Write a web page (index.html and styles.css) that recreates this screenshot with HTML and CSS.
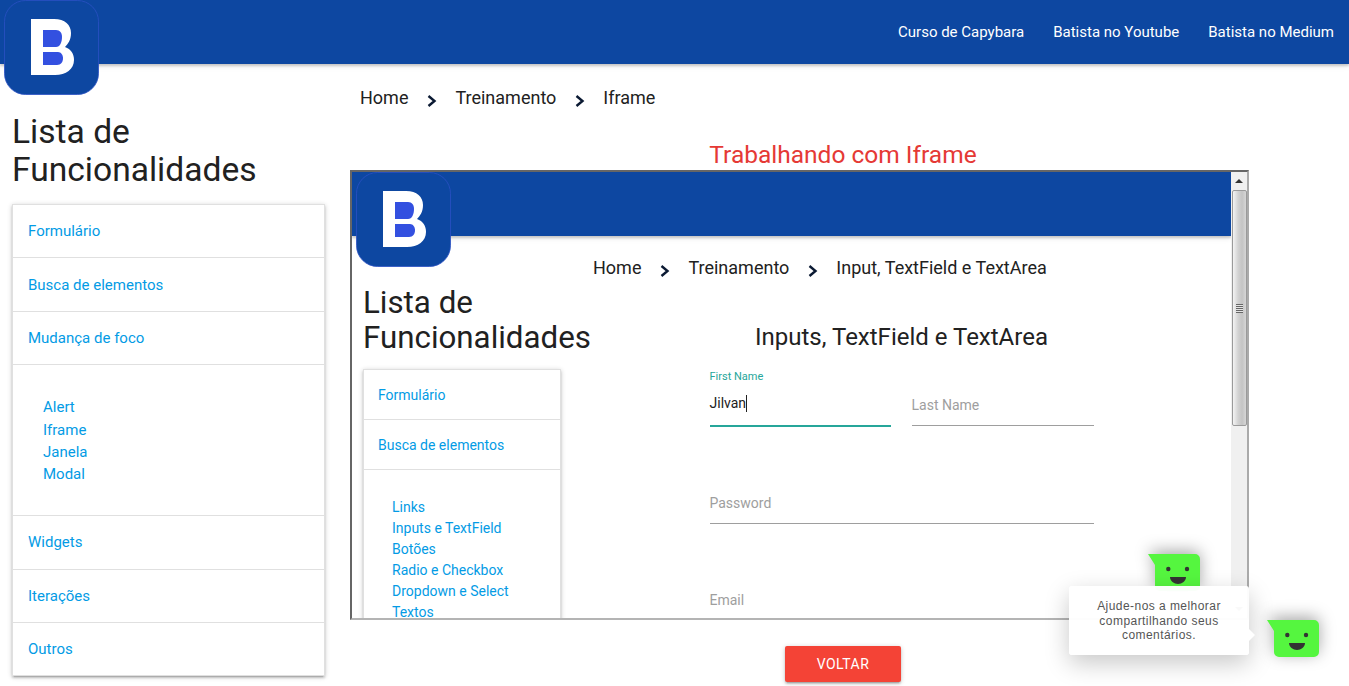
FILE: index.html
```html
<!DOCTYPE html>
<html lang="pt-BR">
<head>
<meta charset="utf-8">
<title>Trabalhando com Iframe</title>
<link rel="stylesheet" href="styles.css">
</head>
<body>
<svg class="defs" width="0" height="0" aria-hidden="true">
  <defs>
    <symbol id="logo" viewBox="0 0 95 95">
      <rect x="0.5" y="0.5" width="94" height="94" rx="21" fill="#0d47a1" stroke="#2b50c4" stroke-width="0.8"/>
      <path d="M27 19H50C61 19 67 25 67 33C67 40 64 44 61 47C67 49 70 54 70 60C70 69 62 75 51 75H27Z" fill="#fff"/>
      <path d="M39 30H52C56 30 58 33 58 37C58 42 56 47 52 47H39Z" fill="#3350e0"/>
      <path d="M39 52H54C57 52 59 55 59 58C59 62 57 65 53 65H39Z" fill="#3350e0"/>
    </symbol>
    <symbol id="chev" viewBox="0 0 10 12">
      <path d="M1.5 1L7.5 6L1.5 11" fill="none" stroke="#0b1a33" stroke-width="2.4"/>
    </symbol>
    <symbol id="bot" viewBox="0 0 52 37">
      <path d="M0 0H47a5 5 0 0 1 5 5V32a5 5 0 0 1-5 5H12a5 5 0 0 1-5-5V11Z" fill="#55f63f"/>
      <circle cx="20.3" cy="15" r="2.2" fill="#333"/>
      <circle cx="39" cy="15" r="2.2" fill="#333"/>
      <path d="M22 23H38C38 27 34 30 30 30C26 30 22 27 22 23Z" fill="#333"/>
    </symbol>
  </defs>
</svg>

<header class="topbar">
  <svg class="logo"><use href="#logo"/></svg>
  <nav class="topnav">
    <a>Curso de Capybara</a>
    <a>Batista no Youtube</a>
    <a>Batista no Medium</a>
  </nav>
</header>

<div class="layout">
  <aside class="side">
    <h2 class="side-title">Lista de Funcionalidades</h2>
    <ul class="menu">
      <li class="menu-item"><a>Formulário</a></li>
      <li class="menu-item"><a>Busca de elementos</a></li>
      <li class="menu-item"><a>Mudança de foco</a></li>
      <li class="menu-sub">
        <a>Alert</a><a>Iframe</a><a>Janela</a><a>Modal</a>
      </li>
      <li class="menu-item"><a>Widgets</a></li>
      <li class="menu-item"><a>Iterações</a></li>
      <li class="menu-item"><a>Outros</a></li>
    </ul>
  </aside>

  <main class="content">
    <div class="crumbs">
      <span>Home</span><svg class="chev"><use href="#chev"/></svg>
      <span>Treinamento</span><svg class="chev"><use href="#chev"/></svg>
      <span>Iframe</span>
    </div>
    <h4 class="page-title">Trabalhando com Iframe</h4>

    <div class="frame">
      <div class="frame-page">
        <div class="topbar inner-bar">
          <svg class="logo inner-logo"><use href="#logo"/></svg>
        </div>
        <div class="inner-layout">
          <aside class="inner-side">
            <h2 class="inner-title">Lista de Funcionalidades</h2>
            <ul class="menu inner-menu">
              <li class="inner-item"><a>Formulário</a></li>
              <li class="inner-item"><a>Busca de elementos</a></li>
              <li class="inner-sub">
                <a>Links</a><a>Inputs e TextField</a><a>Botões</a><a>Radio e Checkbox</a><a>Dropdown e Select</a><a>Textos</a><a>Tabelas</a>
              </li>
            </ul>
          </aside>
          <section class="inner-main">
            <div class="crumbs inner-crumbs">
              <span>Home</span><svg class="chev"><use href="#chev"/></svg>
              <span>Treinamento</span><svg class="chev"><use href="#chev"/></svg>
              <span>Input, TextField e TextArea</span>
            </div>
            <h4 class="inner-heading">Inputs, TextField e TextArea</h4>
            <form class="form">
              <div class="field field-active">
                <label class="field-label">First Name</label>
                <span class="field-value">Jilvan<i class="caret"></i></span>
              </div>
              <div class="field"><span class="field-hint">Last Name</span></div>
              <div class="field field-wide"><span class="field-hint">Password</span></div>
              <div class="field field-wide"><span class="field-hint">Email</span></div>
            </form>
          </section>
        </div>
      </div>
      <div class="scrollbar">
        <div class="scroll-btn"><span class="arrow-up"></span></div>
        <div class="scroll-thumb"><span class="grip"></span></div>
        <div class="scroll-rest"><span class="arrow-down"></span></div>
      </div>
    </div>

    <div class="actions"><a class="btn">VOLTAR</a></div>
  </main>
</div>

<svg class="bot bot-back"><use href="#bot"/></svg>
<div class="tip">Ajude-nos a melhorar compartilhando seus comentários.</div>
<svg class="bot bot-front"><use href="#bot"/></svg>
</body>
</html>
```

FILE: styles.css
```css
* { box-sizing: border-box; }
html, body {
  margin: 0;
  height: 686px;
  overflow: hidden;
  background: #fff;
  font-family: Roboto, "Liberation Sans", sans-serif;
  color: #212121;
}
.defs { position: absolute; }
ul { list-style: none; margin: 0; padding: 0; }
h2, h4 { margin: 0; font-weight: 400; }
a { color: #039be5; display: block; }

.topbar {
  position: relative;
  height: 64px;
  background: #0d47a1;
  box-shadow: 0 2px 2px rgba(0,0,0,.16), 0 2px 6px rgba(0,0,0,.1);
  display: flex;
  justify-content: flex-end;
  align-items: center;
}
.logo {
  position: absolute;
  left: 4px;
  top: 0;
  width: 95px;
  height: 95px;
  z-index: 2;
}
.topnav { display: flex; gap: 29px; padding-right: 15px; }
.topnav a { color: #fff; font-size: 15px; }

.layout { display: flex; }
.side { width: 337px; padding: 0 12px; flex: none; }
.side-title {
  margin-top: 49px;
  font-size: 33.6px;
  line-height: 38px;
}
.menu {
  margin-top: 15px;
  border: 1px solid #e0e0e0;
  border-bottom: 0;
  background: #fff;
  box-shadow: 0 2px 2px rgba(0,0,0,.14), 0 3px 1px -2px rgba(0,0,0,.12), 0 1px 5px rgba(0,0,0,.2);
}
.menu-item {
  height: 53.4px;
  padding: 0 15px;
  display: flex;
  align-items: center;
  border-bottom: 1px solid #e0e0e0;
  font-size: 15px;
}
.menu-sub {
  height: 151px;
  padding: 31px 30px 0;
  border-bottom: 1px solid #e0e0e0;
  font-size: 15px;
  line-height: 22.4px;
}

.content { flex: 1; min-width: 0; padding-left: 13px; }
.crumbs {
  display: flex;
  align-items: flex-start;
  padding-top: 22px;
  padding-left: 10px;
  font-size: 18px;
  line-height: 24px;
  color: #212121;
}
.chev {
  width: 10px;
  height: 12px;
  margin: 9px 18px 0 19px;
}
.page-title {
  margin: 30px 0 0 -13px;
  text-align: center;
  font-size: 24.5px;
  line-height: 30px;
  color: #e53935;
}

.frame {
  width: 899px;
  height: 450px;
  margin-top: 0;
  display: flex;
  border: 2px solid;
  border-color: #666 #aaa #b4b4b4 #666;
  background: #fff;
  overflow: hidden;
}
.frame-page { flex: 1; min-width: 0; position: relative; overflow: hidden; }
.inner-bar { z-index: 1; }
.inner-logo { left: 4px; }
.inner-layout { display: flex; }
.inner-side { width: 220px; padding-left: 11px; flex: none; }
.inner-title {
  margin-top: 49px;
  font-size: 31.3px;
  line-height: 35px;
  width: 260px;
}
.inner-menu { margin-top: 14px; width: 198px; font-size: 14px; }
.inner-item {
  height: 50px;
  padding: 0 14px;
  display: flex;
  align-items: center;
  border-bottom: 1px solid #e0e0e0;
}
.inner-sub { padding: 27px 28px 0; line-height: 21px; }

.inner-main { flex: 1; min-width: 0; }
.inner-crumbs { padding-top: 20px; padding-left: 21px; }
.inner-heading {
  margin-top: 42px;
  text-align: center;
  font-size: 24px;
  line-height: 30px;
}
.form {
  width: 384px;
  margin: 18px auto 0;
  display: grid;
  grid-template-columns: 181px 182px;
  column-gap: 21px;
  row-gap: 41px;
}
.field {
  height: 56px;
  position: relative;
  display: flex;
  flex-direction: column;
  justify-content: flex-end;
  border-bottom: 1px solid #9e9e9e;
  padding-bottom: 10px;
}
.field-wide { grid-column: 1 / -1; }
.field-active {
  border-bottom: 2px solid #26a69a;
  height: 57px;
  padding-bottom: 11px;
}
.field-label {
  position: absolute;
  top: 0;
  left: 0;
  font-size: 11px;
  line-height: 14px;
  color: #26a69a;
}
.field-value { font-size: 14px; line-height: 22px; color: #212121; }
.caret {
  display: inline-block;
  width: 1px;
  height: 17px;
  background: #212121;
  vertical-align: -4px;
}
.field-hint { font-size: 14px; line-height: 20px; color: #9e9e9e; }

.scrollbar {
  width: 16px;
  flex: none;
  background: #f0f0f0;
  display: flex;
  flex-direction: column;
  align-items: center;
}
.scroll-btn {
  height: 18px;
  width: 100%;
  display: flex;
  align-items: center;
  justify-content: center;
}
.arrow-up {
  border: 4px solid transparent;
  border-top: 0;
  border-bottom: 4px solid #333;
}
.scroll-thumb {
  height: 236px;
  width: 15px;
  border: 1px solid #9a9a9a;
  border-radius: 2px;
  background: linear-gradient(90deg, #f4f4f4, #d2d2d2 40%, #c4c4c4 70%, #d6d6d6);
  display: flex;
  align-items: center;
  justify-content: center;
}
.grip {
  width: 7px;
  height: 9px;
  background: repeating-linear-gradient(#666 0 1px, #e4e4e4 1px 2px);
}
.scroll-rest {
  flex: 1;
  width: 100%;
  display: flex;
  align-items: flex-end;
  justify-content: center;
  padding-bottom: 7px;
}
.arrow-down {
  border: 4px solid transparent;
  border-bottom: 0;
  border-top: 4px solid #555;
}

.actions { margin: 26px 0 0 -13px; display: flex; justify-content: center; }
.btn {
  width: 116px;
  height: 36px;
  line-height: 36px;
  text-align: center;
  color: #fff;
  background: #f44336;
  border-radius: 2px;
  font-size: 14px;
  letter-spacing: .5px;
  box-shadow: 0 2px 2px rgba(0,0,0,.14), 0 3px 1px -2px rgba(0,0,0,.12), 0 1px 5px rgba(0,0,0,.2);
}

.bot {
  position: absolute;
  width: 52px;
  height: 37px;
  filter: drop-shadow(0 -3px 8px rgba(0,0,0,.35));
}
.bot-back { left: 1148px; top: 554px; }
.bot-front { left: 1267px; top: 620px; }
.tip {
  position: absolute;
  left: 1069px;
  top: 586px;
  width: 180px;
  height: 69px;
  padding: 13px 20px 0;
  background: rgba(255,255,255,.97);
  border-radius: 3px;
  box-shadow: 0 8px 24px rgba(0,0,0,.22);
  font-family: "Liberation Sans", Arial, sans-serif;
  font-size: 12px;
  line-height: 14.7px;
  letter-spacing: .45px;
  text-align: center;
  color: #555;
}
.tip::after {
  content: "";
  position: absolute;
  right: -6px;
  top: 43px;
  width: 12px;
  height: 12px;
  background: #fff;
  clip-path: polygon(50% 0, 100% 50%, 50% 100%);
}
```
